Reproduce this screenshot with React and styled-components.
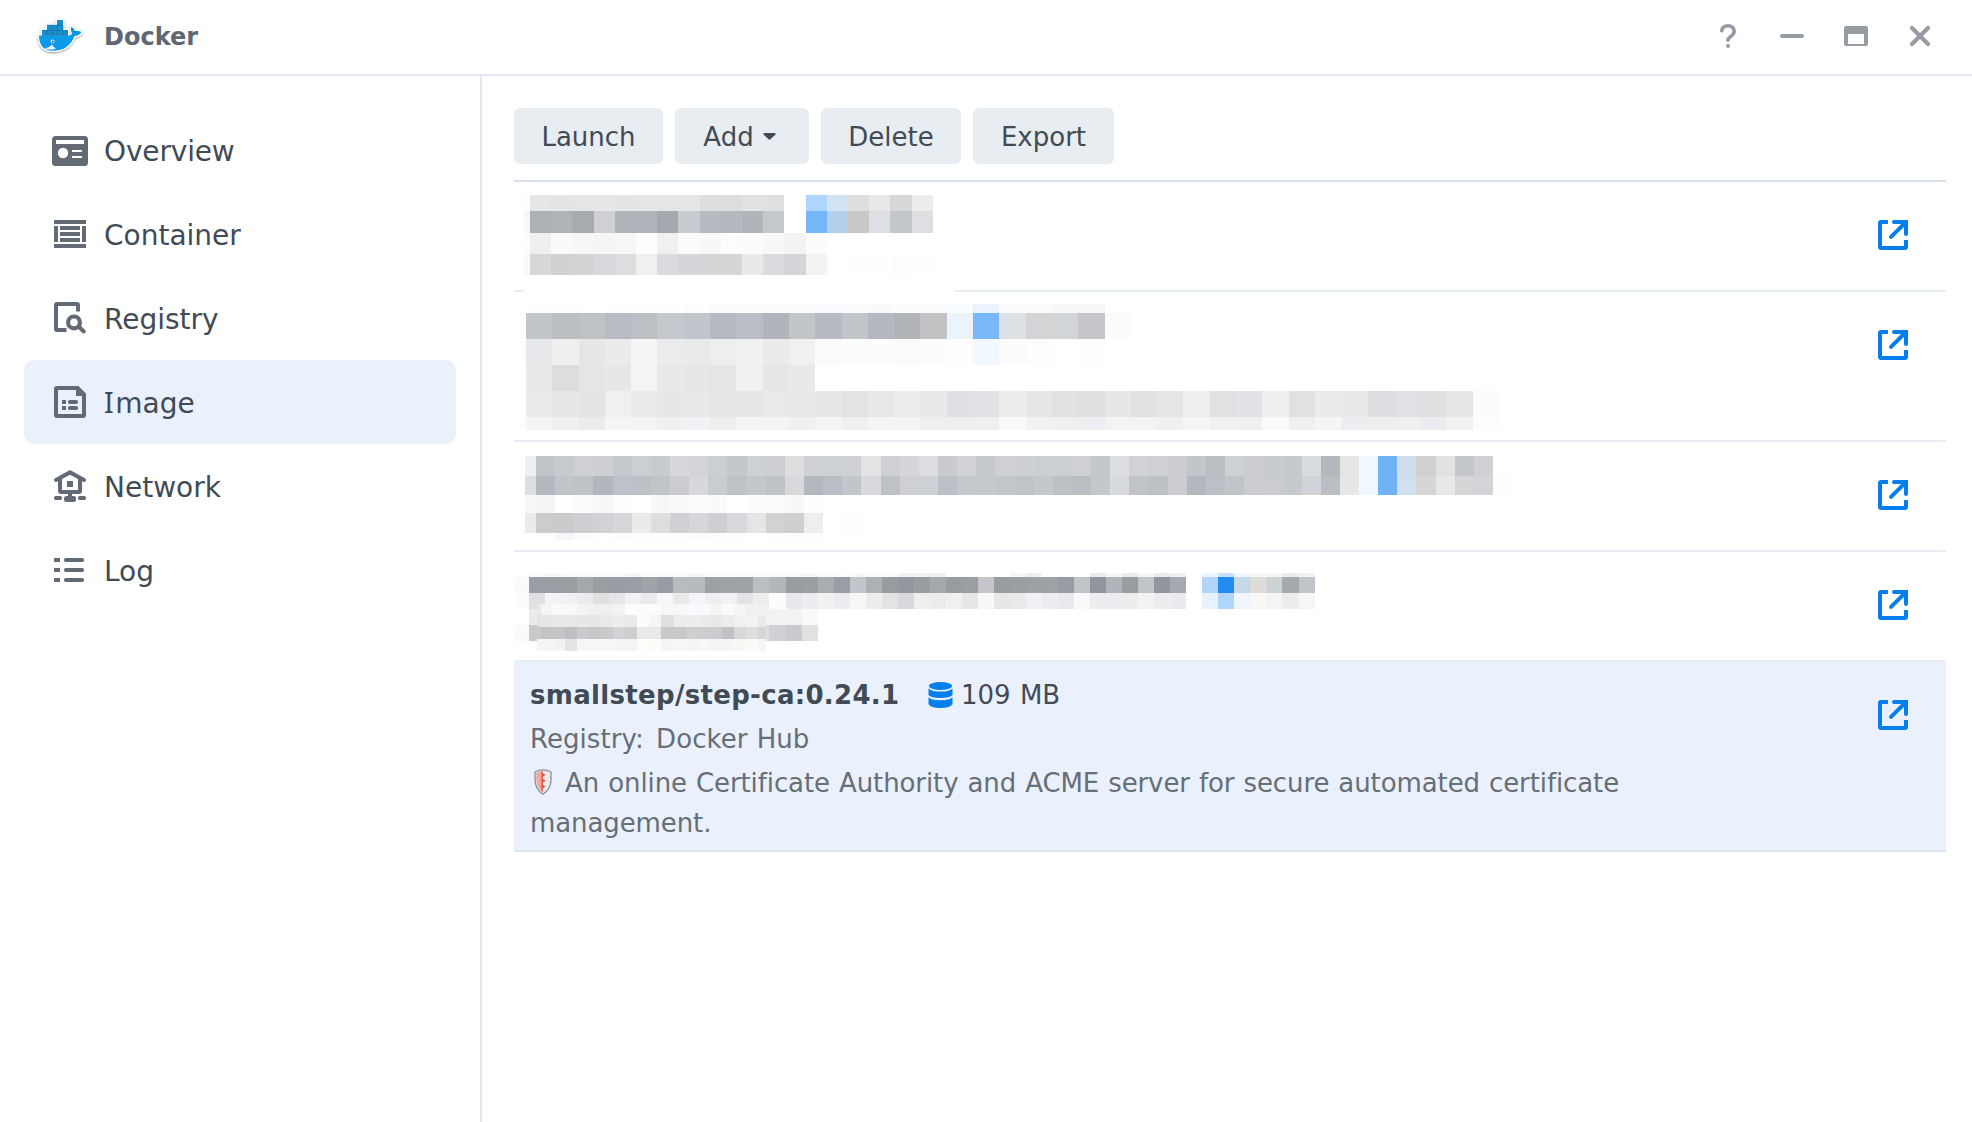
import React from "react";
import styled, { createGlobalStyle } from "styled-components";

const GlobalStyle = createGlobalStyle`
  * { box-sizing: border-box; }
  body {
    margin: 0;
    background: #fff;
    color: #414b55;
    font-family: Verdana, "DejaVu Sans", sans-serif;
  }
  svg { display: block; flex: none; }
`;

const Window = styled.div`
  display: flex;
  flex-direction: column;
  width: 1972px;
  height: 1122px;
  overflow: hidden;
  background: #fff;
`;

const TitleBar = styled.header`
  display: flex;
  align-items: center;
  height: 76px;
  flex: none;
  padding: 0 40px 2px 36px;
  border-bottom: 2px solid #e2e8f1;
`;

const Title = styled.h1`
  margin: 0 auto 0 20px;
  padding-top: 2px;
  font-size: 24px;
  line-height: 32px;
  font-weight: 700;
  color: #5f6872;
`;

const Controls = styled.div`
  display: flex;
  gap: 40px;
`;

const Body = styled.div`
  display: flex;
  flex: 1;
  min-height: 0;
`;

const Sidebar = styled.nav`
  display: flex;
  flex-direction: column;
  width: 482px;
  flex: none;
  padding: 32px 24px;
  border-right: 2px solid #e2e8f1;
`;

const NavItem = styled.div`
  display: flex;
  align-items: center;
  gap: 16px;
  height: 84px;
  padding-left: 28px;
  border-radius: 10px;
  background: ${(p) => (p.$active ? "#eaf1fd" : "transparent")};
`;

const NavLabel = styled.span`
  display: block;
  padding-top: ${(p) => (p.$serifI ? 2 : 4)}px;
  font-size: 28px;
  line-height: 36px;
  letter-spacing: ${(p) => p.$track}px;
  &::first-letter {
    ${(p) => (p.$serifI ? 'font-family: "Noto Sans"; font-size: 28.5px; letter-spacing: 1.6px;' : "")}
  }
`;

const Main = styled.main`
  display: flex;
  flex-direction: column;
  flex: 1;
  padding: 32px 26px 0 32px;
`;

const Toolbar = styled.div`
  display: flex;
  gap: 12px;
  padding-bottom: 16px;
  border-bottom: 2px solid #d8e1ea;
`;

const Button = styled.button`
  display: flex;
  align-items: center;
  justify-content: center;
  gap: 9px;
  width: ${(p) => p.$w}px;
  height: 56px;
  padding: 1px ${(p) => (p.$menu ? 5 : 0)}px 0 0;
  border: 0;
  border-radius: 6px;
  background: #e8edf2;
  color: #414b55;
  font: 26px/32px Verdana, "DejaVu Sans", sans-serif;
`;

const Row = styled.section`
  display: flex;
  justify-content: space-between;
  height: ${(p) => p.$h}px;
  padding-right: 38px;
  border-bottom: 2px solid ${(p) => (p.$active ? "#d8e4ef" : "#e6edf3")};
  background: ${(p) => (p.$active ? "#eaf1fd" : "transparent")};
`;

const OpenLink = styled.a`
  margin-top: 38px;
`;

const Info = styled.div`
  display: flex;
  flex-direction: column;
  gap: 4px;
  width: 1150px;
  padding: 13px 0 0 16px;
  font-size: 26px;
  line-height: 40px;
  color: #666e76;
`;

const NameLine = styled.div`
  display: flex;
  align-items: center;
  color: #414b55;
`;

const ImageName = styled.strong`
  width: 398px;
  letter-spacing: 0.31px;
`;

const Size = styled.span`
  margin-left: 8px;
  word-spacing: 1px;
`;

const Registry = styled.div`
  letter-spacing: 0.06px;
  word-spacing: 0.9px;
`;

const RegistryLabel = styled.span`
  margin-right: 3px;
`;

const Description = styled.p`
  margin: 0;
  letter-spacing: -0.1px;
  word-spacing: 0.9px;
`;

const InlineIcon = styled.span`
  display: inline-block;
  vertical-align: -3px;
  margin: 0 4px;
`;

const MosaicBox = styled.div`
  position: relative;
  margin: ${(p) => p.$margin};
  height: ${(p) => p.$h}px;
  background: #fff;
`;

const MosaicLayer = styled.div`
  position: absolute;
  left: 22px;
  top: 31px;
  width: 229px;
  overflow: hidden;
`;

const Band = styled.div`
  display: flex;
  height: ${(p) => p.$h}px;
`;

const Cell = styled.i`
  flex: none;
  width: ${(p) => p.$w}px;
`;

function Bands({ lead, size, rows }) {
  return rows.map(([height, colors], r) => (
    <Band key={r} $h={height}>
      {colors
        .trim()
        .split(/\s+/)
        .map((c, i) => (
          <Cell key={i} $w={i === 0 ? lead : size} style={{ background: c === "-" ? "none" : `#${c}` }} />
        ))}
    </Band>
  ));
}

const mosaicA = [
  [16, "fdfdfd e5e6e8 e2e4e6 e4e6e8 e5e7e8 e3e4e6 e4e6e8 e3e5e6 e4e5e7 dddee0 dcdddf e2e2e4 dfe0e1 - aed5fb d2e3f3 dededd e7e8ea d7d8da ebecee"],
  [22, "f6f7f8 abb1b5 afb3b8 a7aaaf cfd0d4 b0b3b8 b0b3b9 a5a9ad c8ccd0 b7bbc1 b5b8bf b0b5ba c5c9cd - 75b6f9 b3cfeb cac8c6 dedfe4 c3c7cb dedfe1"],
  [21, "fdfdfd efefef fafafa f7f7f7 f5f5f5 f7f7f7 fdfdfd f0f0f0 fbfbfb f8f8f8 fdfdfd fbfbfb f8f8f8 f3f3f3 fcfcfc"],
  [21, "fafafa d7d7d7 d1d1d3 d3d3d5 d8d9dc dddde0 eff1f0 dbdce0 d6d6da d6d6d7 d6d6d6 e8eae9 dbdcdf d4d5d8 f3f3f3 - fefefe fefefe fdfdfd fefefe"],
];

const mosaicB = [
  [9, "- fcfefe fdfdfd - fdfefe fdfefe fdfefe fcfdfd fcfcfd fbfcfd fcfcfd fcfcfc fafbfe fbfcfd f9fafc fcfcfc fcfcfc f9fcff eaf3fe fafbfb fafbfb f6f7f9 f6f6f8"],
  [26, "fdfdfd c2c6c9 babfc2 bec2c5 b8bbc2 bcc0c4 c5c9cd c2c5cb b6b9bf babdc4 b1b4ba c2c6c9 b7bac1 c2c6ca b5b8be b1b5ba c2c2c4 ebf4fd 7ab7f8 dce1e5 d3d4d6 d1d5d8 c7c7cb fcfcfc"],
  [26.3, "fdfdfd e6e8eb efefef e6e6e6 ebebeb f5f5f5 eaecee e9ebea ecefed eff2f0 ebebeb f0f0f0 fbfbfb fafdfc fcfcfc fbfbfb fcfcfc fefefe f2f8ff fcfcfc fdfdfd - fdfdfd"],
  [25.4, "- e9e9e9 dddddd e5e5e5 e7e7e7 f5f5f5 e9e9e9 e5e8e7 e3e6e4 eff2f1 e6e6e6 e9e9e9"],
  [26.3, "fdfdfd ebebeb e7e7e7 e4e4e4 f0f0f0 e9ecea e7e7e7 e8e8e8 e7e7e7 e5e8e6 eaeaea e8e8e8 e7e7e7 e3e3e3 e8e8e8 ececec e9e9e9 dfe0e3 e1e2e5 ebeeed e6e6e6 dfe2e0 e0e0e0 e7e7e7 dfe2e0 e3e6e4 eeeeee e1e1e2 e1e2e6 efefef e1e1e1 e9ecea e9e9e9 dddee2 dfe1e4 e0e0e0 e4e7e5 fbfbfb"],
  [13, "fdfdfd f5f5f5 f0f0f0 ebebeb f6f6f6 f2f5f4 f0f0f0 f0f2f6 eeeeee f2f5f4 f4f4f4 f0f0f0 f2f5f4 eef1ef f5f5f5 f3f6f5 efefef eeeeee eef0f0 f9f9f9 f1f1f1 eff1f0 ecedf0 f2f4f3 f2f4f3 f0f0f0 f6f6f6 f1f1f2 f0f0f0 fafafa efefef f5f5f5 edeef1 f0eeec f2f0ee ebecef f1f1f1 fdfdfd"],
];

const mosaicC = [
  [19.6, "eeeff1 c1c6ca c7cbcf cfd0d3 cecfd3 c5c8cc cbcfd3 c7cbd0 d7d8db d3d4d7 cbced2 c4c8cc cdd1d5 cecfd3 dddee0 cfd0d4 cdd1d4 cfd0d4 e1e3e5 cfd0d3 d5d6d9 dcdde0 cacbcf d1d2d6 c5c9cd cfd0d4 cecfd3 cbcfd2 cbcfd2 cfcfd4 c4c8cc dcdee0 d1d2d6 cfd0d4 cbcbd0 c2c6ca babec2 cdd1d4 cbccd0 c8ccd0 c6cace d9dbdd b2b8be e5e5e3 f0f8ff 71b2f6 d0ddeb d0d0d0 e0e2e4 c3c7cb cfd0d4"],
  [19.2, "dddee0 b5b9bf c1c5c8 bfc3c6 b3b6bc bec1c8 bdc1c5 c1c5c8 cbccd0 d7d8dd c9cdd1 bfc3c7 c4c8cc bfc3c7 d8d9db b4b7bd babdc4 c2c6ca d9dadd bec2c5 cfd0d4 cdd0d4 bcbfc6 c5c8cd c6cace c2c7ca c0c4c8 c3c8cb bdc1c5 babfc3 c3c8cb d9dadd c0c4c8 bdc1c5 cbcbd0 b4b7bd bcbfc6 c1c5c8 cccdd1 cbccd0 c6cace d2d3d8 babec4 e7e7e7 f0f8ff 71b2f6 d1e0ed d6d6d4 e7e8ea d6d6d9 d3d4d8 fdfdfd"],
  [18.6, "f8f8f8 f5f5f5 ffffff fcfcfc f8f8f8 fdfdfd ffffff f8f8f8 f9f9f9 fcfcfa fafafa ffffff fcfcfc fcfcfc f8f8f8 fdfdfd"],
  [19.2, "ebebeb cbccce cccacd cecfd2 d1d2d5 d5d7da ebebeb dedede cfd0d3 d6d7db cecfd3 d8d9dd e5e5e5 d2d2d3 cfcfcf eeeeee - fdfdfd"],
  [7, "- fdfefe f4f6fa fafdfc fefefe fbfdfc fbfefd fcfefd fcfefd fbfbfb fcfefd fcfefd - fcfefd fcfefd fcfefd"],
];

const mosaicD = [
  [4, "- fafafa f5f6f6 fafafa fafafa f8f9f9 fafafa f4f6f5 fbfbfb fafafa fafafa f5f6f6 fbfbfb fafafa fafafa fafafa fafafa fafafa f5f6f6 fafafa fdfdfd f8f8f8 fafafa fafafa f1f3f2 f1f3f2 eeeff0 - - - - f5f6f6 eeeff0 - - - e9ebec f5f6f6 eaebec f5f6f6 eaebec eff0f0 - edf5fe c8e1fb f2f6fc f8f8f7 f6f6f6 ebecee f0f1f3"],
  [16, "fafafa 9a9ea7 999ea2 9a9ea2 a5a8ad 9a9da1 9a9ca5 9a9da6 a0a4a9 989ba4 b7bcbe b7bbbd 9ca1a3 9ea2a5 a0a4a8 babfc3 b3b6bb 999d9f 9a9ea2 a8adb0 9a9da6 c2c6ca adb1b5 989c9e 94989f 999d9f a5a9ad 989c9f 9b9fa2 c5c6cb 999d9f 9a9ea1 9ca1a4 9ea2a6 989ca5 c1c5c8 92959d b1b4b9 999da0 c1c5c8 93969e a6a9b1 - b4d5fa 238cf3 c5d8ea dedcd9 cfd2d5 a6a9ae c1c4c9"],
  [16, "fcfcfc dfe0e2 f2f4f8 eff1f4 eaebed dfe0e2 e5e6e9 f1f2f5 e9eaec f5f7fb e8e9eb f4f6fb eeeff1 f1f2f5 e3e3e6 ecedef fcfcfc e8e9ec ebedf0 f0f2f1 ebedf0 f7f7f7 ebeeed e1e3e5 d8d9dc efefef ebecee f0f0f0 e6e7e9 f8f8f8 e6e7e9 e9eaec f0f1f4 ecedf0 e8eaee f8faf9 ecedef ecedf0 ebedee f3f3f3 ecedef eaebee - e7f2fe b0d5fa f0f5fe f8f8f6 f4f4f4 ebecee f5f6f8"],
  [16, "- ebebec f2f2f2 f2f2f2 f2f2f2 f2f2f2 f2f2f2 f2f2f2 f2f2f2 f2f2f2 f2f2f2 f2f2f2 f2f2f2 f2f2f2 f2f2f2 f2f2f2 f3f3f3 f2f2f2 f9f9f9"],
  [16, "fafafa c8c9cc c8c9cc c8c9cc c8c9cc c8c9cc c8c9cc c8c9cc c8c9cc c8c9cc c8c9cc c8c9cc c8c9cc c8c9cc c8c9cc dededf d0d1d4 cacbce e1e1e2"],
];

const mosaicDOver = [
  [11.3, "e7e9e8 f5f5f5 fafafa f8f8f8 f3f3f3 edeff2 f0f0f0 f2f4f3 fcfcfc fcfcfc fbfbfb f8f8f8 f6f8f8 f8faff f8faff f5f5f5 fbfbfb f5f5f5 f0f0f0 f0f0f0"],
  [12, "e2e4e3 e7e7e7 e7e8e8 e8e8e8 e7e7e7 e7e7e7 eaeaea ecedec eaeaea fbfbfb f4f5f5 e0e0e0 ebeeec ebeeec eaecec e7eae9 ebecec f0f0f0 f2f2f2 e8ebe9"],
  [11.9, "cacacb c3c3c6 c5c5c8 bebfc2 c9cacd c6c6c9 cbcbce d2d3d6 cececf e9e9e9 e7eae9 c8c9cc c8c9cb cdcfd0 cccdcf ccccd0 c2c2c6 d8d8d9 dedede d5d7d6"],
  [11.8, "f5f5f5 f5f5f5 f3f3f3 e4e4e4 f6f6f6 f6f6f6 f7f7f7 f5f6f3 f5f5f5 fdfdfb fcfcf8 f5f5f5 f7f7f7 f5f5f3 f6f6f6 f5f5f5 f5f5f5 f8f8f6 fafaf7 f6f6f6"],
];

const GRAY = "#626b75";

const OverviewIcon = () => (
  <svg width="36" height="36" fill={GRAY}>
    <rect y="4" width="36" height="30" rx="3.5" />
    <rect x="4" y="8" width="28" height="4" fill="#fff" />
    <circle cx="11" cy="21" r="5.2" fill="#fff" />
    <rect x="20" y="18" width="10" height="2" fill="#fff" />
    <rect x="20" y="24" width="10" height="2" fill="#fff" />
  </svg>
);
const ContainerIcon = () => (
  <svg width="36" height="36" fill={GRAY}>
    <path d="M2 4h32v4H2zM2 28h32v4H2zM2 10h4v16H2zM30 10h4v16h-4zM8 10h20v4H8zM8 16h20v4H8zM8 22h20v4H8z" />
  </svg>
);
const RegistryIcon = () => (
  <svg width="36" height="36" fill="none" stroke={GRAY} strokeWidth="4">
    <path d="M26 11.500V5q0-1-1-1H5q-1 0-1 1v24q0 1 1 1h9.500" />
    <circle cx="22" cy="22.400" r="5.900" strokeWidth="4.200" />
    <path d="M26.500 26.500l5.300 5" strokeLinecap="round" />
  </svg>
);
const ImageIcon = () => (
  <svg width="36" height="36" fill={GRAY}>
    <path fillRule="evenodd" d="M5 2h21.500L34 9.500V31q0 3-3 3H5q-3 0-3-3V5q0-3 3-3zM6 6v24h24V12h-6V6z" />
    <path d="M10 16h4v4h-4zM10 22h4v4h-4z" />
    <rect x="16" y="16" width="10" height="4" rx="1.800" />
    <rect x="16" y="22" width="10" height="4" rx="1.800" />
  </svg>
);
const NetworkIcon = () => (
  <svg width="36" height="36" fill="none" stroke={GRAY} strokeWidth="4">
    <path d="M4 12L18 4.400 32 12" strokeLinecap="round" />
    <path d="M8 11v12q0 1 1 1h18q1 0 1-1V11" />
    <path d="M15 13h6v6h-6z" fill={GRAY} stroke="none" />
    <path d="M18 25v5" />
    <g fill={GRAY} stroke="none">
      <rect x="12" y="28" width="12" height="6" rx="2.500" />
      <rect x="2" y="28" width="8" height="4" rx="1.800" />
      <rect x="26" y="28" width="8" height="4" rx="1.800" />
    </g>
  </svg>
);
const LogIcon = () => (
  <svg width="36" height="36" fill={GRAY}>
    {[6, 16, 26].map((y) => (
      <g key={y}>
        <rect x="2" y={y} width="6" height="4" />
        <rect x="12" y={y} width="20" height="4" rx="1.800" />
      </g>
    ))}
  </svg>
);

const OpenIcon = () => (
  <svg width="30" height="30" fill="none" stroke="#057feb" strokeWidth="4">
    <path d="M10 2H3q-1 0-1 1v24q0 1 1 1h24q1 0 1-1v-7" />
    <path d="M16 2h12v12" />
    <path d="M16 2h0M28 14h0M13 16.800L27 3" strokeLinecap="round" />
  </svg>
);

const DatabaseIcon = () => (
  <svg width="25" height="26" fill="#057feb">
    <ellipse cx="12.500" cy="4" rx="11.700" ry="4" />
    <path d="M.5 6.200Q3 9.600 12.500 9.600T24.500 6.200V13q-2.500 3-12 3T.5 13z" />
    <path d="M.5 15.200Q3 18.200 12.500 18.200T24.500 15.200V22q-2 4-12 4T.5 22z" />
  </svg>
);

const ShieldIcon = () => (
  <svg width="18" height="26">
    <path d="M9 .8Q13 .8 17 3v8q0 9-8 14.200Q1 20 1 11V3Q5 .8 9 .8z" fill="#e9ebec" stroke="#8d8f92" strokeWidth="1.300" />
    <path d="M9 2.200Q5.500 2.200 2.300 3.800V11q0 7.500 6.700 12z" fill="#f4a79f" />
    <path d="M7 2.500L9 2.200v21L7 21.500z" fill="#ea7466" />
    <path d="M8 4l3.800 2L8 8zM8 9.500l3.800 2.200L8 14zM8 15.500l3.500 2L8 20z" fill="#e0503f" />
  </svg>
);

const DockerLogo = () => (
  <svg width="48" height="40">
    <defs>
      <linearGradient id="hull" x1="0" y1="0" x2="0" y2="1">
        <stop offset="0" stopColor="#1b8fcf" />
        <stop offset="0.45" stopColor="#0b9bea" />
        <stop offset="1" stopColor="#0998e8" />
      </linearGradient>
      <filter id="lift" x="-20%" y="-20%" width="140%" height="150%">
        <feDropShadow dx="0" dy="0.8" stdDeviation="0.8" floodOpacity="0.5" />
      </filter>
    </defs>
    <g filter="url(#lift)" stroke="#fff" strokeWidth="2.600" strokeLinejoin="round" fill="#fff">
      <path d="M21 4h6v10h5v5.500h1Q36 19 36 17.500 33.800 14 35.200 10.700 38.300 12.300 38.800 15 42 14.300 45.500 16 43 19.800 38.500 20 33 34.700 17 34.700 3 34.700 3 19.500h3V14h5V9h10z" />
    </g>
    <path d="M3 19.500H33Q36 19 36 17.500 33.800 14 35.200 10.700 38.300 12.300 38.800 15 42 14.300 45.500 16 43 19.800 38.500 20 33 34.700 17 34.700 3 34.700 3 19.500z" fill="url(#hull)" />
    <path d="M21 4h6v10h5v5.500H6V14h5V9h10z" fill="#1a8dca" />
    <path d="M6 14.300h21M11 9.200h16M11 14v5M16.200 9v10M21.500 9v10M27 9v10M6 19.300h26" stroke="#0e6fa6" strokeWidth="0.600" fill="none" />
    <path d="M8.500 32q4.500.2 7.500-3.800 1 2.700 4 4.200-6.500 2.600-11.500-.4z" fill="#e9f3f8" />
    <circle cx="16.700" cy="25.300" r="1.800" fill="#fff" />
    <circle cx="16.900" cy="25.400" r="0.900" fill="#25445a" />
  </svg>
);

const CTRL = "#969ca3";
const HelpIcon = () => (
  <svg width="24" height="24" fill="none" stroke={CTRL} strokeWidth="3.600" strokeLinecap="round">
    <path d="M5.800 6.800Q6.500 1.800 12 1.800T18.200 7.200Q18.200 10 15 12.200T12 16.200" />
    <circle cx="12" cy="22" r="2" fill={CTRL} stroke="none" />
  </svg>
);
const MinimizeIcon = () => (
  <svg width="24" height="24">
    <rect y="10" width="24" height="4" rx="2" fill={CTRL} />
  </svg>
);
const MaximizeIcon = () => (
  <svg width="24" height="24">
    <path fillRule="evenodd" d="M2 2h20q2 0 2 2v16q0 2-2 2H2q-2 0-2-2V4q0-2 2-2zM4 10v10h16V10z" fill={CTRL} />
  </svg>
);
const CloseIcon = () => (
  <svg width="24" height="24" stroke={CTRL} strokeWidth="4.200" strokeLinecap="round">
    <path d="M4 4l16 16M20 4L4 20" />
  </svg>
);
const CaretIcon = () => (
  <svg width="13" height="7">
    <path d="M1 0h11q1 .5.500 1.500L7.500 6.300q-1 .8-2 0L.5 1.500Q0 .5 1 0z" fill="#414b55" />
  </svg>
);

const nav = [
  { label: "Overview", Icon: OverviewIcon, track: -0.15 },
  { label: "Container", Icon: ContainerIcon, track: 0 },
  { label: "Registry", Icon: RegistryIcon, track: 0 },
  { label: "Image", Icon: ImageIcon, track: 0, active: true },
  { label: "Network", Icon: NetworkIcon, track: 0 },
  { label: "Log", Icon: LogIcon, track: 0 },
];

const Open = () => (
  <OpenLink>
    <OpenIcon />
  </OpenLink>
);

export default function App() {
  return (
    <Window>
      <GlobalStyle />
      <TitleBar>
        <DockerLogo />
        <Title>Docker</Title>
        <Controls>
          <HelpIcon />
          <MinimizeIcon />
          <MaximizeIcon />
          <CloseIcon />
        </Controls>
      </TitleBar>
      <Body>
        <Sidebar>
          {nav.map(({ label, Icon, track, active }) => (
            <NavItem key={label} $active={active}>
              <Icon />
              <NavLabel $track={track} $serifI={label[0] === "I"}>{label}</NavLabel>
            </NavItem>
          ))}
        </Sidebar>
        <Main>
          <Toolbar>
            <Button $w={149}>Launch</Button>
            <Button $w={134} $menu>
              Add
              <CaretIcon />
            </Button>
            <Button $w={140}>Delete</Button>
            <Button $w={141}>Export</Button>
          </Toolbar>
          <Row $h={110}>
            <MosaicBox $margin="13px 0 0 10px" $h={97}>
              <Bands lead={6} size={21.21} rows={mosaicA} />
              <Band $h={17}>
                <Cell $w={431} />
              </Band>
            </MosaicBox>
            <Open />
          </Row>
          <Row $h={150}>
            <MosaicBox $margin="12px 0 0 4px" $h={126}>
              <Bands lead={8} size={26.3} rows={mosaicB} />
            </MosaicBox>
            <Open />
          </Row>
          <Row $h={110}>
            <MosaicBox $margin="14px 0 0 11px" $h={84}>
              <Bands lead={11} size={19.15} rows={mosaicC} />
            </MosaicBox>
            <Open />
          </Row>
          <Row $h={110}>
            <MosaicBox $margin="21px 0 0 1px" $h={68}>
              <Bands lead={14} size={16.04} rows={mosaicD} />
              <MosaicLayer>
                <Bands lead={4} size={12.06} rows={mosaicDOver} />
              </MosaicLayer>
            </MosaicBox>
            <Open />
          </Row>
          <Row $h={190} $active>
            <Info>
              <NameLine>
                <ImageName>smallstep/step-ca:0.24.1</ImageName>
                <DatabaseIcon />
                <Size>109 MB</Size>
              </NameLine>
              <Registry>
                <RegistryLabel>Registry:</RegistryLabel> Docker Hub
              </Registry>
              <Description>
                <InlineIcon>
                  <ShieldIcon />
                </InlineIcon>{" "}
                An online Certificate Authority and ACME server for secure automated certificate management.
              </Description>
            </Info>
            <Open />
          </Row>
        </Main>
      </Body>
    </Window>
  );
}
